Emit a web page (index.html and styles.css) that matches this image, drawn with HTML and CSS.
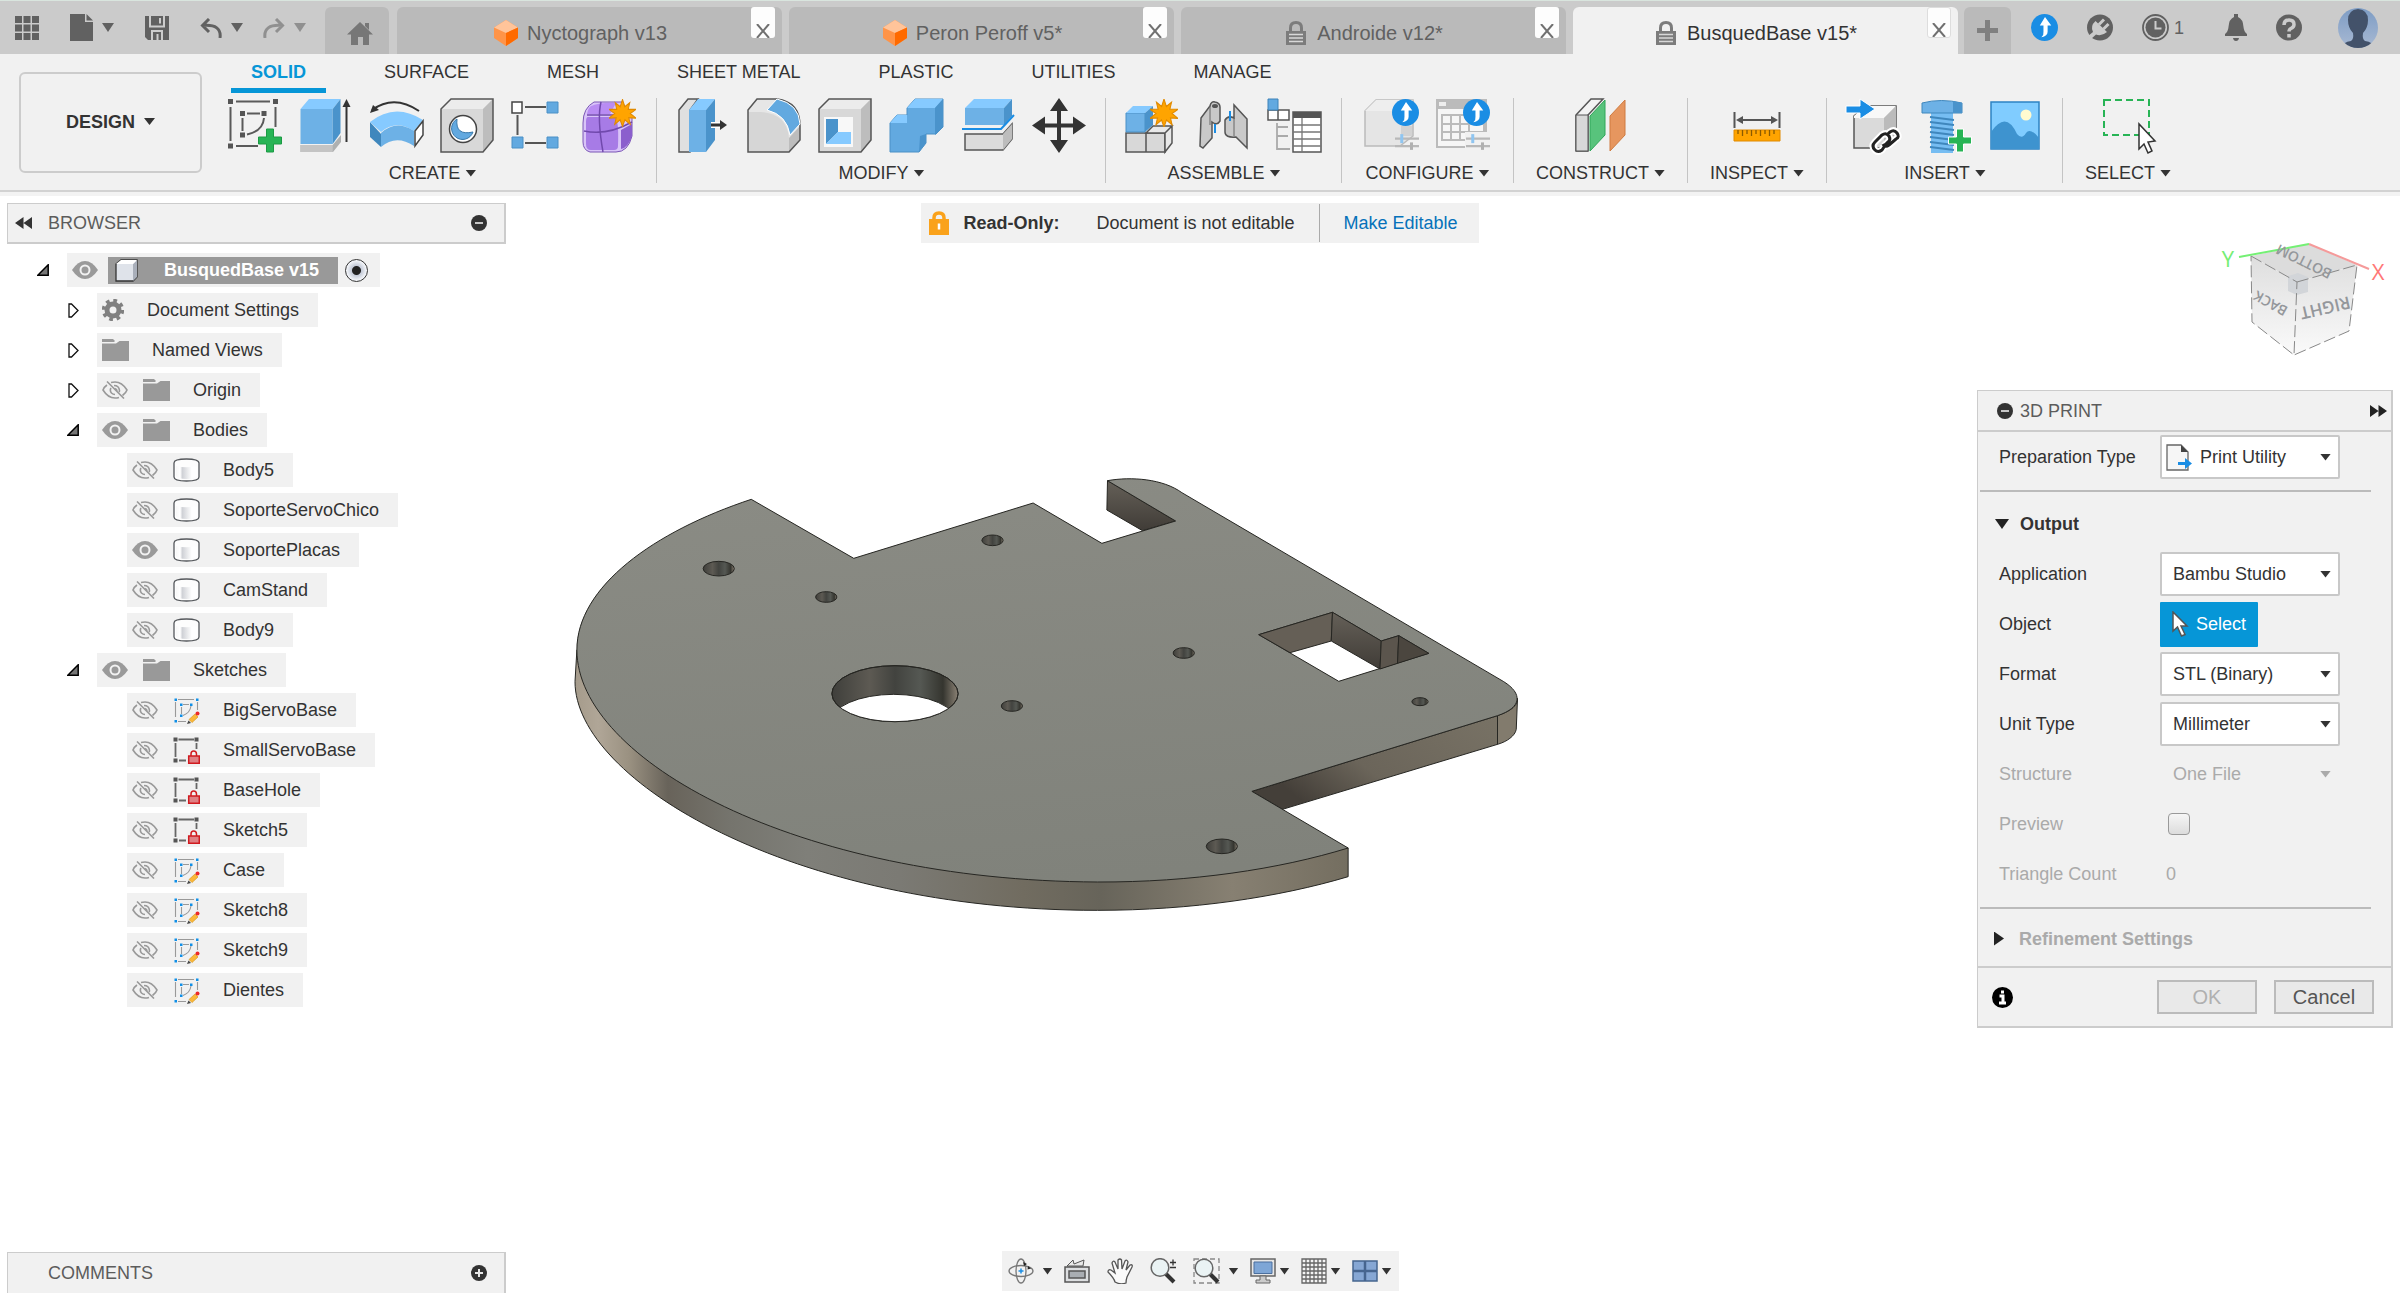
FILE: index.html
```html
<!DOCTYPE html>
<html lang="en">
<head>
<meta charset="utf-8">
<title>BusquedBase v15</title>
<link rel="stylesheet" href="styles.css">
</head>
<body>
<svg class="defs" aria-hidden="true">
  <symbol id="eye" viewBox="0 0 26 18"><path d="M0 9Q6 0 13 0T26 9Q20 18 13 18T0 9Z" fill="#9a9a9a"/><circle cx="13" cy="9" r="4.500" fill="none" stroke="#f1f1f1" stroke-width="2"/></symbol>
  <symbol id="eye-off" viewBox="0 0 26 18"><g fill="none" stroke="#999" stroke-width="1.600"><path d="M5 4Q1.500 6.500 1 9Q6 17 13 17Q15 17 17 16.400M9 1.500Q11 1 13 1Q20 1 25 9Q24 12 20.500 14.500"/><path d="M9 7Q7.500 9.500 9.500 12Q11 13.500 13 13.500M12 4.500Q17 4.500 17.500 9.500Q17.500 10.500 17 11M13 7.500Q15 8 15 10M5 0.500L22 17.500"/></g></symbol>
  <symbol id="folder" viewBox="0 0 27 22"><path d="M0 4.500H14L17.500 2H27V22H0Z" fill="#999"/><path d="M0 0H11L13 2L12 3H0Z" fill="#999"/></symbol>
  <symbol id="body" viewBox="0 0 27 24"><defs><linearGradient id="cyl"><stop offset="0" stop-color="#f7f7f7"/><stop offset=".2" stop-color="#fff"/><stop offset=".3" stop-color="#cfd1d6"/><stop offset=".75" stop-color="#fff"/></linearGradient></defs><path d="M1 5V19Q1 23 13.500 23T26 19V5Q26 1 13.500 1T1 5Z" fill="#fdfdfd" stroke="#55585c" stroke-width="1.300"/><path d="M3 8Q13 10.500 24 8V18Q22 21 13.500 21T3 18Z" fill="url(#cyl)"/></symbol>
  <symbol id="sketch-edit" viewBox="0 0 27 27"><path d="M5 2.500H21M2.500 5V20M24.500 5V13M5 24.500H13M8.500 10V17M10 7.500H16M18 9Q17 16 10 18.500" fill="none" stroke="#999" stroke-width="1.100"/><path d="M1.500 1.500h2.500v2.500H1.500zM23 1.500h2.500v2.500h-2.500zM1.500 23h2.500v2.500H1.500zM7 6.500h2.500v2.500H7zM17 6.500h2.500v2.500h-2.500zM7 17.500h2.500v2.500H7z" fill="#0f8fe8"/><path d="M16 22.500L22 17L25 20L19 25.500Z" fill="#fbb83a" stroke="#d99a20" stroke-width=".7"/><path d="M14 27L15.500 23.500L18 26Z" fill="#444"/><circle cx="24.500" cy="16.500" r="2" fill="#ee2b2b"/></symbol>
  <symbol id="sketch-lock" viewBox="0 0 27 27"><path d="M5.500 2.500H21M2.500 6V20M23.500 6V12M6 23.500H13" fill="none" stroke="#666" stroke-width="1.800"/><path d="M.5.500h4v4h-4zM21.500.500h4v4h-4zM.5 21.500h4v4h-4z" fill="#555"/><path d="M18 19V17Q18 14 20.700 14T23.500 17V19" fill="none" stroke="#d11a1f" stroke-width="1.500"/><path d="M15.700 19h10.600v7.300H15.700z" fill="#df8084" stroke="#d11a1f" stroke-width="1.500"/></symbol>
  <symbol id="open" viewBox="0 0 12 12"><path d="M.8 11.200L11.200.8V11.200Z" fill="#777" stroke="#000" stroke-width="1.500"/></symbol>
  <symbol id="closed" viewBox="0 0 11 15"><path d="M1 1H3.500L10 7.500L3.500 14H1Z" fill="#fff" stroke="#111" stroke-width="1.300"/></symbol>
  <symbol id="minus" viewBox="0 0 16 16"><circle cx="8" cy="8" r="8" fill="#333"/><path d="M4 8H12" stroke="#c8c8c8" stroke-width="2"/></symbol>
  <symbol id="plus-dot" viewBox="0 0 16 16"><circle cx="8" cy="8" r="8" fill="#333"/><path d="M4 8H12M8 4V12" stroke="#e8e8e8" stroke-width="2"/></symbol>
  <symbol id="rewind" viewBox="0 0 17 12"><path d="M8.500 0V12L0 6ZM17 0V12L8.500 6Z" fill="#333"/></symbol>
  <symbol id="forward" viewBox="0 0 17 12"><path d="M0 0V12L8.500 6ZM8.500 0V12L17 6Z" fill="#222"/></symbol>
  <symbol id="design" viewBox="0 0 24 26"><path d="M12 0L24 7.500V18L12 26L0 18V7.500Z" fill="#ff9448"/><path d="M12 0L24 7.500L12 13L0 7.500Z" fill="#ffc49a"/><path d="M24 7.500V18L12 26V13Z" fill="#ff6a00"/></symbol>
  <symbol id="lock" viewBox="0 0 20 24"><path d="M4.500 10V7Q4.500 1.500 10 1.500T15.500 7V10" fill="none" stroke="#7c7c7c" stroke-width="3"/><path d="M0 10H20V24H0Z" fill="#7c7c7c"/><path d="M3 13.500H17M3 17H17M3 20.500H17" stroke="#d8d8d8" stroke-width="1.300"/></symbol>
  <symbol id="badge" viewBox="0 0 26 26"><circle cx="13" cy="13" r="13" fill="#1a8de4"/><path d="M13.500 3L19.500 11H16V17Q16 21 10 22.500Q12.500 20 12 17V11H8.500Z" fill="#fff"/></symbol>
  <symbol id="burst" viewBox="0 0 26 26"><path d="M13 0L15.200 7L20 3L18.500 9.500L26 9.500L20.500 13.500L26 18L19 17.500L20.500 24L15.300 19.500L13 26L10.700 19.500L5.500 24L7 17.500L0 18L5.500 13.500L0 9.500L7.500 9.500L6 3L10.800 7Z" fill="#ffa400" stroke="#e08a00"/></symbol>
  <symbol id="sliders" viewBox="0 0 32 21"><path d="M0 6H32M0 16H32" stroke="#b8b8b8" stroke-width="3"/><path d="M9 0V12" stroke="#8fc5f0" stroke-width="4"/><path d="M22 11V21" stroke="#b0b0b0" stroke-width="4"/></symbol>
</svg>

<header class="titlebar">
  <div class="quick">
    <button class="plain" aria-label="Data panel"><svg width="24" height="24"><path d="M0 0h7v7H0zM8.500 0h7v7h-7zM17 0h7v7h-7zM0 8.500h7v7H0zM8.500 8.500h7v7h-7zM17 8.500h7v7h-7zM0 17h7v7H0zM8.500 17h7v7h-7zM17 17h7v7h-7z" fill="#616161"/></svg></button>
    <button class="plain pair" aria-label="File"><svg width="23" height="27"><path d="M0 0H15V8H23V27H0Z" fill="#616161"/><path d="M16.500 0L23 6.500H16.500Z" fill="#616161"/></svg><i class="caret caret-lg"></i></button>
    <button class="plain" aria-label="Save"><svg width="24" height="24"><path d="M0 0H24V24H3L0 21Z" fill="#616161"/><path d="M5 0V10.500H19V0M7 24V15H17V24M12.500 18V24M15 2V7.500" fill="none" stroke="#cdcdcd" stroke-width="2"/></svg></button>
    <div class="history">
      <button class="plain pair" aria-label="Undo"><svg width="22" height="20"><path d="M20 20Q22 6 3 7.500M9 1L2.500 7.500L9 14" fill="none" stroke="#616161" stroke-width="3"/></svg><i class="caret caret-lg"></i></button>
      <button class="plain pair dim" aria-label="Redo"><svg width="22" height="20"><path d="M2 20Q0 6 19 7.500M13 1L19.500 7.500L13 14" fill="none" stroke="#616161" stroke-width="3"/></svg><i class="caret caret-lg"></i></button>
    </div>
  </div>
  <button class="plain home" aria-label="Home"><svg width="26" height="23"><path d="M13 0L26 12.500H22V23H16V15H11V23H4V12.500H0ZM18 1H22V8L18 4Z" fill="#777"/></svg></button>
  <nav class="docs">
    <div class="doc"><a href="#nyctograph" class="doc-name"><svg width="24" height="26"><use href="#design"/></svg>Nyctograph v13</a><button class="plain close" aria-label="Close"><svg width="14" height="14"><path d="M1 0L13 14M13 0L1 14"/></svg></button></div>
    <div class="doc"><a href="#peron" class="doc-name"><svg width="24" height="26"><use href="#design"/></svg>Peron Peroff v5*</a><button class="plain close" aria-label="Close"><svg width="14" height="14"><path d="M1 0L13 14M13 0L1 14"/></svg></button></div>
    <div class="doc"><a href="#androide" class="doc-name locked"><svg width="20" height="24"><use href="#lock"/></svg>Androide v12*</a><button class="plain close" aria-label="Close"><svg width="14" height="14"><path d="M1 0L13 14M13 0L1 14"/></svg></button></div>
    <div class="doc current"><a href="#busqued" class="doc-name locked"><svg width="20" height="24"><use href="#lock"/></svg>BusquedBase v15*</a><button class="plain close" aria-label="Close"><svg width="14" height="14"><path d="M1 0L13 14M13 0L1 14"/></svg></button></div>
  </nav>
  <button class="plain newdoc" aria-label="New design"><svg width="21" height="21"><path d="M10.500 0V21M0 10.500H21" stroke="#808080" stroke-width="5"/></svg></button>
  <div class="status">
    <button class="plain" aria-label="Updates"><svg width="27" height="27"><use href="#badge"/></svg></button>
    <button class="plain" aria-label="Extensions"><svg width="26" height="27" viewBox="0 0 26 27"><circle cx="13" cy="13.500" r="13" fill="#616161"/><path d="M8.500 7L20 18Q14 23 9 20.500L4 25L1 22L6 18Q3 12 8.500 7Z" fill="#cbcbcb"/><path d="M12 10.500L17 5.500M16.500 15L21.500 10" stroke="#cbcbcb" stroke-width="3"/></svg></button>
    <button class="plain jobs" aria-label="Job status"><svg width="27" height="27" viewBox="0 0 27 27"><circle cx="13.500" cy="13.500" r="12.500" fill="none" stroke="#616161" stroke-width="1.800"/><circle cx="13.500" cy="13.500" r="10" fill="#616161"/><path d="M13.500 7V14.500H19.500" fill="none" stroke="#ccc" stroke-width="2"/></svg><span>1</span></button>
    <button class="plain" aria-label="Notifications"><svg width="22" height="27" viewBox="0 0 22 27"><path d="M9 3V0H13V3Q18 5 18.500 13Q19 18 22 20V22H0V20Q3 18 3.500 13Q4 5 9 3ZM8 24H14Q13.500 27 11 27T8 24Z" fill="#616161"/></svg></button>
    <button class="plain" aria-label="Help"><svg width="26" height="27" viewBox="0 0 26 27"><circle cx="13" cy="13.500" r="13" fill="#616161"/><path d="M8 11Q8 6 13 6T18 10.500Q18 13 15 14.500Q13 15.500 13 17.500M13 20V23.500" fill="none" stroke="#ccc" stroke-width="3.500"/></svg></button>
    <button class="plain avatar" aria-label="Account"><svg width="40" height="40" viewBox="0 0 40 40"><defs><clipPath id="av"><circle cx="20" cy="20" r="20"/></clipPath><linearGradient id="avg" x2="0" y2="1"><stop offset="0" stop-color="#7d9cc4"/><stop offset="1" stop-color="#a8b9d3"/></linearGradient></defs><g clip-path="url(#av)"><path d="M0 0H40V40H0Z" fill="url(#avg)"/><path d="M3 40Q5 34 13 33Q16 31 15 25Q10 20 10 12Q10 2 20 1Q30 2 30 12Q30 20 25 25Q24 31 27 33Q35 34 37 40Z" fill="#43526a"/></g></svg></button>
  </div>
</header>

<section class="ribbon">
  <button class="design">DESIGN <i class="caret"></i></button>
  <div class="ribbon-main">
    <nav class="modes">
      <a href="#solid" class="on">SOLID</a><a href="#surface">SURFACE</a><a href="#mesh">MESH</a><a href="#sheet">SHEET METAL</a><a href="#plastic">PLASTIC</a><a href="#utilities">UTILITIES</a><a href="#manage">MANAGE</a>
    </nav>
    <div class="panels">
      <div class="panel">
        <div class="tools">
          <button class="plain" aria-label="Create sketch"><svg width="56" height="56"><path d="M9 3.500H43M3.500 9V43M48.500 9V29M9 48H31M15.500 20V33M20 15.500H33M37 20Q36 33 20 36.500" fill="none" stroke="#5a5a5a" stroke-width="2"/><path d="M1 1h5v5H1zM46 1h5v5h-5zM1 45.500h5v5H1zM13 13h5v5h-5zM34.500 13h5v5h-5zM13 34.500h5v5h-5z" fill="#555"/><path d="M39.500 31h7v8h8v7h-8v8h-7v-8h-8v-7h8z" fill="#27b455" stroke="#1c9a44"/></svg></button>
          <button class="plain" aria-label="Extrude"><svg width="56" height="56"><path d="M2.500 47H34.700L43 37V44L35 54H2.500Z" fill="#aeb0b0"/><path d="M2.500 47H34.700V54H2.500Z" fill="#c4c4c4"/><path d="M2.500 11H34.700V46H2.500Z" fill="#6db1e6"/><path d="M2.500 11L11 1H42.500L34.700 11Z" fill="#86caff"/><path d="M34.700 11L42.500 1V35L34.700 46Z" fill="#4a93cb"/><path d="M48.500 44V5" stroke="#333" stroke-width="2"/><path d="M48.500 1L52.500 9H44.500Z" fill="#333"/></svg></button>
          <button class="plain" aria-label="Revolve"><svg width="56" height="56"><path d="M3 12Q25 -4 50 13" fill="none" stroke="#333" stroke-width="2"/><path d="M1 15L4 7L10 12Z" fill="#333"/><path d="M1 24L12 36V49L1 39Z" fill="#3f87bd"/><path d="M1 24Q26 4 54 22L45 33Q27 21 12 34Z" fill="#86caff"/><path d="M12 35Q27 21 45 33V48Q27 36 12 49Z" fill="#6db1e6"/><path d="M46 33L54 23V37L46 48Z" fill="#fff" stroke="#444" stroke-width="1.500"/></svg></button>
          <button class="plain" aria-label="Hole"><svg width="56" height="56"><path d="M1 11L11 1H53V42L43 54H1Z" fill="#d8d8d8"/><path d="M1 11L11 1H53L43 11Z" fill="#ececec"/><path d="M53 1V42L43 54V11Z" fill="#bdbdbd"/><path d="M1 11L11 1H53V42L43 54H1Z" fill="none" stroke="#555" stroke-width="1.500"/><circle cx="23" cy="31" r="13.500" fill="#fff" stroke="#444" stroke-width="1.500"/><path d="M17 21A11 11 0 1 0 33 34Q15 38 17 21Z" fill="#62a9e0" stroke="#3979ab"/></svg></button>
          <button class="plain" aria-label="Pattern"><svg width="56" height="56"><path d="M14 9H35M6.500 17V37M14 45H35" stroke="#555" stroke-width="2"/><path d="M1 4h10v11H1z" fill="#fff" stroke="#444" stroke-width="1.500"/><path d="M36 4h11v11H36zM1 39h11v11H1zM36 39h11v11H36z" fill="#62a9e0" stroke="#4b90c6"/></svg></button>
          <button class="plain" aria-label="Create form"><svg width="56" height="56"><path d="M1 25Q1 10 12 4H40L50 18V38Q46 54 34 54H8Q1 52 1 44Z" fill="#d9c4f8" stroke="#7b56b6"/><path d="M6 19H33Q37 22 36 48Q36 52 32 52H9Q4 52 4 46V24Q4 19 6 19Z" fill="#a77be6"/><path d="M39 32L50 26V38Q46 50 39 51Z" fill="#8b5fcd"/><path d="M9 8Q20 4 34 5L28 16H5Q6 10 9 8Z" fill="#b98cf3"/><path d="M2 33Q25 38 50 24M19 4Q15 20 21 54M5 17H37" fill="none" stroke="#7149ad" stroke-width="1.500"/><use href="#burst" x="27" y="1" width="27" height="28"/></svg></button>
        </div>
        <button class="plain label">CREATE <i class="caret"></i></button>
      </div>
      <div class="panel">
        <div class="tools">
          <button class="plain" aria-label="Press pull"><svg width="56" height="56"><path d="M3 12L12 1H22L14 12V54H3Z" fill="#e0e0e0" stroke="#555" stroke-width="1.500"/><path d="M13 12H30V54H13Z" fill="#6db1e6"/><path d="M13 12L22 1H39L30 12Z" fill="#86caff"/><path d="M30 12L39 1V42L30 54Z" fill="#4a93cb"/><path d="M35 27H46" stroke="#fff" stroke-width="6"/><path d="M35 27H46" stroke="#333" stroke-width="3"/><path d="M44 22L51 27L44 32Z" fill="#333"/></svg></button>
          <button class="plain" aria-label="Fillet"><svg width="56" height="56"><path d="M1 12L10 1H30Q53 4 53 28V42L42 54H1Z" fill="#e6e6e6"/><path d="M1 14H14Q40 16 42 40V54H1Z" fill="#d6d6d6"/><path d="M42 40L53 28V42L42 54Z" fill="#bdbdbd"/><path d="M1 12L10 1H30Q53 4 53 28V42L42 54H1Z" fill="none" stroke="#555" stroke-width="1.500"/><path d="M20 12L30 1Q52 6 53 26L43 37Q40 17 20 12Z" fill="#62a9e0" stroke="#fff"/></svg></button>
          <button class="plain" aria-label="Shell"><svg width="56" height="56"><path d="M1 11L11 1H53V42L43 54H1Z" fill="#d8d8d8"/><path d="M1 11L11 1H53L43 11Z" fill="#ececec"/><path d="M53 1V42L43 54V11Z" fill="#bdbdbd"/><path d="M1 11L11 1H53V42L43 54H1Z" fill="none" stroke="#555" stroke-width="1.500"/><path d="M6 19H35V49H6Z" fill="#f8f8f8"/><path d="M8 21H20V34L8 46Z" fill="#4a93cb"/><path d="M20 34H33V46H8Z" fill="#86caff"/></svg></button>
          <button class="plain" aria-label="Combine"><svg width="56" height="56"><path d="M1 25L8 17H18V10L26 1H54V29L47 36H37V45L30 54H1Z" fill="#62a9e0" stroke="#4b90c6"/><path d="M18 10L26 1H54L46 10ZM1 25L8 17H18V25Z" fill="#86caff"/><path d="M46 10L54 1V29L46 37ZM31 38L37 36V45L30 54Z" fill="#4a93cb"/></svg></button>
          <button class="plain" aria-label="Split body"><svg width="56" height="56"><path d="M5 10H44V27H5Z" fill="#6db1e6"/><path d="M5 10L14 1H52L44 10Z" fill="#86caff"/><path d="M44 10L52 1V18L44 27Z" fill="#4a93cb"/><path d="M2 31H41L54 17" fill="none" stroke="#1a8de4" stroke-width="2"/><path d="M5 36H43L52 26V41L43 52H5Z" fill="#dcdcdc" stroke="#555" stroke-width="1.500"/><path d="M43 36L52 26V41L43 52Z" fill="#bdbdbd"/></svg></button>
          <button class="plain" aria-label="Move"><svg width="56" height="56"><path d="M28 9V46M10 27.500H46" stroke="#333" stroke-width="4"/><path d="M28 0L37 13H19ZM28 55L37 42H19ZM1 27.500L14 18.500V36.500ZM55 27.500L42 18.500V36.500Z" fill="#333"/></svg></button>
        </div>
        <button class="plain label">MODIFY <i class="caret"></i></button>
      </div>
      <div class="panel">
        <div class="tools">
          <button class="plain" aria-label="New component"><svg width="56" height="56"><path d="M1 35H21V54H1ZM21 35H40V54H21Z" fill="#d8d8d8" stroke="#555" stroke-width="1.500"/><path d="M21 35L28 28H47L40 35ZM40 35L47 28V45L40 54Z" fill="#e8e8e8" stroke="#555" stroke-width="1.500"/><path d="M1 15H20V34H1Z" fill="#6db1e6" stroke="#4b90c6"/><path d="M1 15L8 8H28L20 15Z" fill="#86caff"/><path d="M20 15L28 8V27L20 34Z" fill="#4a93cb"/><use href="#burst" x="25" y="1" width="28" height="28"/></svg></button>
          <button class="plain" aria-label="Joint"><svg width="56" height="56"><path d="M5 20L14 8Q15 3 19 4Q24 5 24 9V23Q21 28 16 24V40L7 50L4 48Z" fill="#c9c9c9" stroke="#555" stroke-width="1.500"/><path d="M14 8V27" fill="none" stroke="#666"/><ellipse cx="19" cy="8" rx="3" ry="2" fill="#555"/><path d="M51 50L40 39Q29 40 29 34V22Q32 17 38 20V7L51 21Z" fill="#c9c9c9" stroke="#555" stroke-width="1.500"/><path d="M38 20V38" stroke="#666"/><path d="M19 26V35M34 13V23" stroke="#1a8de4" stroke-width="2"/></svg></button>
          <button class="plain" aria-label="Component table"><svg width="56" height="56"><path d="M1 12H11V22H1ZM11 12H22V22H11Z" fill="#fff" stroke="#555" stroke-width="1.500"/><path d="M1 1H11V12H1Z" fill="#62a9e0" stroke="#3c82b8"/><path d="M10 25V51H23M10 29H21M10 38H21" fill="none" stroke="#aaa" stroke-width="1.800"/><path d="M26 14H54V54H26Z" fill="#fff" stroke="#555" stroke-width="1.500"/><path d="M26 14H54V20H26Z" fill="#555"/><path d="M26 27H54M26 34H54M26 41H54M26 48H54M35 20V54" stroke="#777" stroke-width="1.300"/></svg></button>
        </div>
        <button class="plain label">ASSEMBLE <i class="caret"></i></button>
      </div>
      <div class="panel narrow">
        <div class="tools">
          <button class="plain" aria-label="Configure model"><svg width="56" height="56"><path d="M1 13L12 2H49V38L36 48H1Z" fill="#e5e5e5" stroke="#bbb" stroke-width="1.500"/><path d="M1 13L12 2H49L37 13Z" fill="#eee"/><path d="M37 28H48V38H37Z" fill="#d2d2d2"/><use href="#badge" x="28" y="1" width="27" height="27"/><use href="#sliders" x="31" y="34" width="24" height="20"/></svg></button>
          <button class="plain" aria-label="Configuration table"><svg width="56" height="56"><path d="M2 2H51V49H2Z" fill="#f6f6f6" stroke="#bbb" stroke-width="2"/><path d="M1 1H52V11H1Z" fill="#bbb"/><path d="M4 4H11V8H4Z" fill="#eee"/><path d="M7 17H49V42H7ZM7 26H49M7 34H49M16 17V42M25 17V42M34 17V42" fill="none" stroke="#bbb" stroke-width="2"/><path d="M30 34H55V55H30Z" fill="#f1f1f1"/><use href="#badge" x="28" y="1" width="27" height="27"/><use href="#sliders" x="31" y="34" width="24" height="20"/></svg></button>
        </div>
        <button class="plain label">CONFIGURE <i class="caret"></i></button>
      </div>
      <div class="panel narrow">
        <div class="tools"><button class="plain" aria-label="Offset plane"><svg width="56" height="56"><path d="M3 17L18 1H30L15 17V53H3Z" fill="#f3f3f3" stroke="#555" stroke-width="1.500"/><path d="M3 17H15V53H3Z" fill="#d8d8d8" stroke="#555"/><path d="M17 18L32 2V37L17 53Z" fill="#58c37c" stroke="#2ea658"/><path d="M37 18L52 2V37L37 53Z" fill="#e6965f" stroke="#cf7b40"/></svg></button></div>
        <button class="plain label">CONSTRUCT <i class="caret"></i></button>
      </div>
      <div class="panel narrow">
        <div class="tools"><button class="plain" aria-label="Measure"><svg width="56" height="56"><path d="M5.500 14V30M50.500 14V30M9 22H47" stroke="#555" stroke-width="2"/><path d="M7 22L14 18V26ZM49 22L42 18V26Z" fill="#555"/><path d="M5 32H51V43H5Z" fill="#ffa400" stroke="#e08a00"/><path d="M9 32V36M13.500 32V38M18 32V36M22.500 32V38M27 32V36M31.500 32V38M36 32V36M40.500 32V38M45 32V36" stroke="#8a5a00" stroke-width="1.300"/></svg></button></div>
        <button class="plain label">INSPECT <i class="caret"></i></button>
      </div>
      <div class="panel">
        <div class="tools">
          <button class="plain" aria-label="Insert derive"><svg width="56" height="56"><path d="M8 18L19 8H50V39L39 50H8Z" fill="#dadada" stroke="#555" stroke-width="1.500"/><path d="M8 18L19 8H50L38 20H8Z" fill="#f8f8f8"/><path d="M50 8V39L38 50V20Z" fill="#bbb"/><path d="M0 8H14V1L29 11L14 21V15H0Z" fill="#1a8de4" stroke="#fff" stroke-width="1"/><g fill="none"><path d="M29 44L36 37Q40 34 43 38Q45 42 42 44L38 48M41 37L44 34Q48 31 51 35T50 41L43 47Q39 50 37 46M29 44Q25 48 29 52Q32 55 36 52L38 49" stroke="#fff" stroke-width="7"/><path d="M29 44L36 37Q40 34 43 38Q45 42 42 44L38 48M41 37L44 34Q48 31 51 35T50 41L43 47Q39 50 37 46M29 44Q25 48 29 52Q32 55 36 52L38 49" stroke="#222" stroke-width="3"/></g></svg></button>
          <button class="plain" aria-label="Insert fastener"><svg width="56" height="56"><path d="M14 15H36V55H14Z" fill="#76bdf2"/><path d="M13 19L37 22M13 24L37 27M13 29L37 32M13 34L37 37M13 39L37 42M13 44L37 47M13 49L37 52" stroke="#3f87bd" stroke-width="1.800"/><path d="M5 5Q24 0 45 5V15H5Z" fill="#6db1e6" stroke="#3f87bd"/><path d="M36 3L45 5V15H36Z" fill="#4a93cb"/><path d="M39.500 31h7v8h8v7h-8v8h-7v-8h-8v-7h8z" fill="#27b455" stroke="#fff"/></svg></button>
          <button class="plain" aria-label="Insert canvas"><svg width="56" height="56"><path d="M3 4H51V51H3Z" fill="#80ccff" stroke="#2d83c4" stroke-width="1.500"/><path d="M3 34Q18 12 29 36Q34 42 38 35Q42 29 51 40V51H3Z" fill="#3e93cf"/><circle cx="38" cy="17" r="5.500" fill="#fffbd0"/></svg></button>
        </div>
        <button class="plain label">INSERT <i class="caret"></i></button>
      </div>
      <div class="panel narrow">
        <div class="tools"><button class="plain" aria-label="Select"><svg width="56" height="56"><path d="M4 2H49V37H4Z" fill="none" stroke="#27b455" stroke-width="2" stroke-dasharray="7 4"/><path d="M39 26V51L44 46L48 55L52 53L48 44L55 43Z" fill="#fff" stroke="#333" stroke-width="1.500"/></svg></button></div>
        <button class="plain label">SELECT <i class="caret"></i></button>
      </div>
    </div>
  </div>
</section>

<main class="work">
  <svg class="model" viewBox="0 0 1568 1410" preserveAspectRatio="none" role="img" aria-label="SoportePlacas body">
    <defs>
      <linearGradient id="face" x1=".3" y1="0" x2=".5" y2="1"><stop offset="0" stop-color="#8a8b84"/><stop offset="1" stop-color="#80827b"/></linearGradient>
      <linearGradient id="rim" gradientUnits="userSpaceOnUse" x1="24" y1="0" x2="1261" y2="0"><stop offset="0" stop-color="#a59b8b"/><stop offset=".03" stop-color="#b0a697"/><stop offset=".07" stop-color="#9a9181"/><stop offset=".12" stop-color="#68635a"/><stop offset=".2" stop-color="#75746d"/><stop offset=".3" stop-color="#7f7f79"/><stop offset=".42" stop-color="#7b7a74"/><stop offset=".58" stop-color="#716c60"/><stop offset=".68" stop-color="#67645a"/><stop offset=".85" stop-color="#878072"/><stop offset="1" stop-color="#746e60"/></linearGradient>
      <linearGradient id="notch" x1="0" y1=".5" x2="1" y2="0"><stop offset="0" stop-color="#443f39"/><stop offset=".35" stop-color="#6b655a"/><stop offset="1" stop-color="#787265"/></linearGradient>
      <linearGradient id="bore"><stop offset="0" stop-color="#3f3f3b"/><stop offset=".3" stop-color="#5d5a53"/><stop offset=".5" stop-color="#42433f"/><stop offset=".7" stop-color="#555853"/><stop offset=".88" stop-color="#35352f"/><stop offset="1" stop-color="#8b8275"/></linearGradient>
      <linearGradient id="dark" x2="0" y2="1"><stop offset="0" stop-color="#656058"/><stop offset="1" stop-color="#403c37"/></linearGradient>
      <clipPath id="hole"><ellipse cx="536" cy="701" rx="101" ry="84"/></clipPath>
    </defs>
    <g class="edges">
      <path d="M27 570L24 665C24 960 370 1351 860 1351C1010 1351 1150 1312 1261 1250V1164L860 1100L100 700Z" fill="url(#rim)"/>
      <path d="M1107 994L1500 767V853L1156 1048Z" fill="url(#notch)"/>
      <path d="M1500 767C1525 750 1532 735 1532 715L1530 808C1528 828 1515 845 1500 853Z" fill="#827b6d"/>
      <path d="M876 62L985 183L932 212L875 150Z" fill="url(#dark)"/>
      <path d="M306 118L470 295L757 129L867 250L985 183L876 62C915 49 965 57 995 98L1510 665C1540 700 1540 742 1500 767L1107 994L1261 1164C1150 1228 1010 1267 860 1266C380 1262 27 900 27 570C27 380 150 215 306 118Z" fill="url(#face)"/>
      <ellipse cx="536" cy="701" rx="101" ry="84" fill="url(#bore)"/>
      <g clip-path="url(#hole)"><ellipse cx="534" cy="787" rx="101" ry="84" fill="#fff"/></g>
      <ellipse cx="536" cy="701" rx="101" ry="84" fill="none"/>
      <path d="M1118 524L1236 457L1314 543L1342 527L1390 580L1246 664Z" fill="#fff"/>
      <path d="M1118 524L1236 457L1234 543L1168 578Z" fill="#655f56"/>
      <path d="M1236 457L1314 543L1312 627L1234 543Z" fill="url(#dark)"/>
      <path d="M1314 543L1342 527L1340 610L1312 627Z" fill="#5b554d"/>
      <path d="M1342 527L1390 580L1340 610Z" fill="#4b463f"/>
      <g fill="url(#bore)">
        <ellipse cx="254" cy="326" rx="25" ry="22"/><ellipse cx="692" cy="241" rx="17" ry="16"/><ellipse cx="426" cy="411" rx="17" ry="16"/><ellipse cx="998" cy="579" rx="17" ry="16"/><ellipse cx="723" cy="738" rx="17" ry="16"/><ellipse cx="1376" cy="725" rx="13" ry="12"/><ellipse cx="1059" cy="1159" rx="25" ry="22"/>
      </g>
    </g>
  </svg>

  <aside class="left">
    <div class="bar"><svg width="17" height="12"><use href="#rewind"/></svg><h2>BROWSER</h2><button class="plain" aria-label="Minimize"><svg width="16" height="16"><use href="#minus"/></svg></button></div>
    <ul class="tree">
      <li><div class="row"><svg class="tw" width="12" height="12"><use href="#open"/></svg><div class="chip root"><svg width="26" height="18"><use href="#eye"/></svg><span class="sel"><svg width="23" height="23"><path d="M1 5L6 1H22V18L18 22H1Z" fill="#dfe3ea" stroke="#333" stroke-width="1.300"/><path d="M18 5L22 1V18L18 22Z" fill="#a9afba"/><path d="M1 5L6 1H22L18 5Z" fill="#fff"/></svg>BusquedBase v15</span><input type="radio" checked aria-label="Activate BusquedBase"></div></div>
        <ul>
          <li><div class="row"><svg class="tw" width="11" height="15"><use href="#closed"/></svg><div class="chip"><svg width="22" height="22" viewBox="0 0 22 22"><circle cx="11" cy="11" r="6" fill="none" stroke="#808080" stroke-width="5"/><circle cx="11" cy="11" r="9.500" fill="none" stroke="#808080" stroke-width="3.500" stroke-dasharray="3.700 3.760"/></svg><span>Document Settings</span></div></div></li>
          <li><div class="row"><svg class="tw" width="11" height="15"><use href="#closed"/></svg><div class="chip"><svg width="27" height="22"><use href="#folder"/></svg><span>Named Views</span></div></div></li>
          <li><div class="row"><svg class="tw" width="11" height="15"><use href="#closed"/></svg><div class="chip"><svg class="eye" width="26" height="18"><use href="#eye-off"/></svg><svg width="27" height="22"><use href="#folder"/></svg><span>Origin</span></div></div></li>
          <li><div class="row"><svg class="tw" width="12" height="12"><use href="#open"/></svg><div class="chip"><svg class="eye" width="26" height="18"><use href="#eye"/></svg><svg width="27" height="22"><use href="#folder"/></svg><span>Bodies</span></div></div>
            <ul>
              <li><div class="chip"><svg class="eye" width="26" height="18"><use href="#eye-off"/></svg><svg width="27" height="24"><use href="#body"/></svg><span>Body5</span></div></li>
              <li><div class="chip"><svg class="eye" width="26" height="18"><use href="#eye-off"/></svg><svg width="27" height="24"><use href="#body"/></svg><span>SoporteServoChico</span></div></li>
              <li><div class="chip"><svg class="eye" width="26" height="18"><use href="#eye"/></svg><svg width="27" height="24"><use href="#body"/></svg><span>SoportePlacas</span></div></li>
              <li><div class="chip"><svg class="eye" width="26" height="18"><use href="#eye-off"/></svg><svg width="27" height="24"><use href="#body"/></svg><span>CamStand</span></div></li>
              <li><div class="chip"><svg class="eye" width="26" height="18"><use href="#eye-off"/></svg><svg width="27" height="24"><use href="#body"/></svg><span>Body9</span></div></li>
            </ul>
          </li>
          <li><div class="row"><svg class="tw" width="12" height="12"><use href="#open"/></svg><div class="chip"><svg class="eye" width="26" height="18"><use href="#eye"/></svg><svg width="27" height="22"><use href="#folder"/></svg><span>Sketches</span></div></div>
            <ul>
              <li><div class="chip"><svg class="eye" width="26" height="18"><use href="#eye-off"/></svg><svg width="27" height="27"><use href="#sketch-edit"/></svg><span>BigServoBase</span></div></li>
              <li><div class="chip"><svg class="eye" width="26" height="18"><use href="#eye-off"/></svg><svg width="27" height="27"><use href="#sketch-lock"/></svg><span>SmallServoBase</span></div></li>
              <li><div class="chip"><svg class="eye" width="26" height="18"><use href="#eye-off"/></svg><svg width="27" height="27"><use href="#sketch-lock"/></svg><span>BaseHole</span></div></li>
              <li><div class="chip"><svg class="eye" width="26" height="18"><use href="#eye-off"/></svg><svg width="27" height="27"><use href="#sketch-lock"/></svg><span>Sketch5</span></div></li>
              <li><div class="chip"><svg class="eye" width="26" height="18"><use href="#eye-off"/></svg><svg width="27" height="27"><use href="#sketch-edit"/></svg><span>Case</span></div></li>
              <li><div class="chip"><svg class="eye" width="26" height="18"><use href="#eye-off"/></svg><svg width="27" height="27"><use href="#sketch-edit"/></svg><span>Sketch8</span></div></li>
              <li><div class="chip"><svg class="eye" width="26" height="18"><use href="#eye-off"/></svg><svg width="27" height="27"><use href="#sketch-edit"/></svg><span>Sketch9</span></div></li>
              <li><div class="chip"><svg class="eye" width="26" height="18"><use href="#eye-off"/></svg><svg width="27" height="27"><use href="#sketch-edit"/></svg><span>Dientes</span></div></li>
            </ul>
          </li>
        </ul>
      </li>
    </ul>
    <div class="bar comments"><h2>COMMENTS</h2><button class="plain" aria-label="Expand comments"><svg width="16" height="16"><use href="#plus-dot"/></svg></button></div>
  </aside>

  <div class="center">
    <div class="readonly">
      <svg width="20" height="24"><path d="M5 10V7Q5 2 10 2T15 7V10" fill="none" stroke="#faa21b" stroke-width="3.500"/><path d="M0 8H20V24H0Z" fill="#faa21b"/><path d="M10 12.500V18.500" stroke="#fff" stroke-width="2.500"/></svg>
      <strong>Read-Only:</strong><span class="note">Document is not editable</span><a href="#edit">Make Editable</a>
    </div>
    <div class="nav">
      <button class="plain wide" aria-label="Orbit"><svg width="26" height="26"><ellipse cx="13" cy="13" rx="12" ry="5.500" fill="none" stroke="#777" stroke-width="1.300"/><ellipse cx="13" cy="13" rx="5" ry="12" fill="none" stroke="#777" stroke-width="1.300"/><circle cx="13" cy="13" r="4" fill="#f1f1f1"/><path d="M13 10.500V15.500M10.500 13H15.500" stroke="#1a8de4" stroke-width="1.500"/><path d="M15 4L19 6L16 8ZM20 8L23 10.500L19.500 11.500Z" fill="#222"/></svg><i class="caret"></i></button>
      <button class="plain" aria-label="Look at"><svg width="26" height="26"><path d="M1 9H25V24H1Z" fill="#dcdee0" stroke="#555" stroke-width="1.500"/><path d="M5 13H21V20H5Z" fill="#a9adb2" stroke="#555" stroke-width="1.500"/><path d="M3 8L9 2L10 6L20 2L19 8Z" fill="#e8e8e8" stroke="#555"/></svg></button>
      <button class="plain" aria-label="Pan"><svg width="26" height="26"><path d="M8 24Q7 20 1 14Q1 11 4 12L8 15L5 5Q6 2 8 4L11 11L11 2Q13 0 14.500 2L15 11L18 3Q20 1 21 4L19 12L23 7Q26 6 25 9L20 19Q19 22 19 25Q13 27 8 24Z" fill="#fafafa" stroke="#555" stroke-width="1.300"/></svg></button>
      <button class="plain" aria-label="Zoom"><svg width="26" height="26"><path d="M16 16L24 24" stroke="#333" stroke-width="4"/><circle cx="10" cy="9.500" r="8.800" fill="#eaf3f4" stroke="#666" stroke-width="1.500"/><path d="M20 4.500H26M23 1.500V7.500M20 9.500H26" stroke="#333" stroke-width="1.300"/></svg></button>
      <button class="plain wide" aria-label="Fit"><svg width="27" height="26"><path d="M1 1H26V25H1Z" fill="none" stroke="#888" stroke-width="1.300" stroke-dasharray="5 3"/><path d="M17 16L25 24" stroke="#333" stroke-width="4"/><circle cx="11" cy="10" r="8.800" fill="#eaf3f4" stroke="#666" stroke-width="1.500"/></svg><i class="caret"></i></button>
      <button class="plain" aria-label="Display settings"><svg width="26" height="26"><path d="M1 1H25V18H1Z" fill="#e6e6e6" stroke="#666" stroke-width="1.500"/><path d="M4 4H22V15.500H4Z" fill="#7ea6d6" stroke="#4b6f9e"/><path d="M10 18H16V22H20V25H6V22H10Z" fill="#ccc" stroke="#666"/></svg><i class="caret"></i></button>
      <button class="plain" aria-label="Grid and snaps"><svg width="26" height="26"><path d="M1 1H25V25H1ZM1 5H25M1 9H25M1 13H25M1 17H25M1 21H25M5 1V25M9 1V25M13 1V25M17 1V25M21 1V25" fill="#f4f4f4" stroke="#666" stroke-width="1.300"/></svg><i class="caret"></i></button>
      <button class="plain" aria-label="Viewports"><svg width="26" height="26"><path d="M1 3H12.500V12.500H1ZM13.500 3H25V12.500H13.500ZM1 13.500H12.500V23H1ZM13.500 13.500H25V23H13.500Z" fill="#86a7d4" stroke="#46658f" stroke-width="1.500"/></svg><i class="caret"></i></button>
    </div>
  </div>

  <aside class="right">
    <svg class="cube" width="173" height="187" viewBox="2220 203 173 187" role="img" aria-label="View cube">
      <defs><linearGradient id="cf" x2="0" y2="1"><stop offset="0" stop-color="#dedede"/><stop offset="1" stop-color="#fafafa"/></linearGradient></defs>
      <path d="M2251 256L2309 244L2357 265L2297 282Z" fill="#dcdcdc"/><path d="M2251 256L2297 282L2294 355L2252 322ZM2297 282L2357 265L2349 331L2294 355Z" fill="url(#cf)"/>
      <path d="M2288 276L2298 273L2308 277V292L2297 295L2288 291Z" fill="#d2d5d9"/>
      <path d="M2251 256L2297 282L2294 355L2252 322ZM2297 282L2357 265L2349 331L2294 355" fill="none" stroke="#888" stroke-dasharray="12 4"/>
      <path d="M2239 257L2309 244" stroke="#74f074" stroke-width="2"/><path d="M2309 244L2369 269" stroke="#f59a9a" stroke-width="2"/>
      <g class="cube-text">
        <text class="ax-y" x="2228" y="267">Y</text><text class="ax-x" x="2378" y="280">X</text>
        <text transform="translate(2324 302) rotate(167)">RIGHT</text>
        <text class="sm" transform="translate(2273 299) rotate(209)">BACK</text>
        <text class="sm" transform="translate(2306 257) rotate(206)">BOTTOM</text>
      </g>
    </svg>
    <form class="dialog">
      <div class="dialog-head"><svg width="16" height="16"><use href="#minus"/></svg><h2>3D PRINT</h2><svg width="17" height="12"><use href="#forward"/></svg></div>
      <div class="dialog-body">
        <div class="field"><label for="prep">Preparation Type</label><div class="pick icon"><select id="prep"><option>Print Utility</option></select><svg width="27" height="27"><path d="M1 1H15L22 8V26H1Z" fill="#f6f6f6" stroke="#666" stroke-width="1.300"/><path d="M15 1L22 8H15Z" fill="#444"/><path d="M12 18H19V14L26 19.500L19 25V21H12Z" fill="#1a8de4"/></svg><i class="caret"></i></div></div>
        <hr>
        <h3 class="section"><i class="tri-down"></i>Output</h3>
        <div class="field"><label for="app">Application</label><div class="pick"><select id="app"><option>Bambu Studio</option></select><i class="caret"></i></div></div>
        <div class="field"><label for="obj">Object</label><button type="button" id="obj" class="select-btn"><svg width="18" height="26"><path d="M2 1V20L6.500 16L10.500 25L14 23.500L10 15H16Z" fill="#fff" stroke="#555" stroke-width="1.500"/></svg>Select</button></div>
        <div class="field"><label for="fmt">Format</label><div class="pick"><select id="fmt"><option>STL (Binary)</option></select><i class="caret"></i></div></div>
        <div class="field"><label for="unit">Unit Type</label><div class="pick"><select id="unit"><option>Millimeter</option></select><i class="caret"></i></div></div>
        <div class="field off"><label for="struct">Structure</label><div class="pick"><select id="struct" disabled><option>One File</option></select><i class="caret"></i></div></div>
        <div class="field off"><label for="prev">Preview</label><input type="checkbox" id="prev" disabled></div>
        <div class="field off"><label for="tri">Triangle Count</label><output id="tri">0</output></div>
        <hr>
        <h3 class="section last"><i class="tri-right"></i>Refinement Settings</h3>
      </div>
      <div class="dialog-foot"><svg width="21" height="21"><circle cx="10.500" cy="10.500" r="10.500" fill="#000"/><path d="M10.500 3.500V6.500M7.500 9H11V15.500M7 16H14" fill="none" stroke="#fff" stroke-width="3"/></svg><button type="button" disabled>OK</button><button type="button">Cancel</button></div>
    </form>
  </aside>
</main>
</body>
</html>
```
FILE: styles.css
```css
* { box-sizing: border-box; }
body {
  margin: 0;
  min-height: 100vh;
  display: flex;
  flex-direction: column;
  background: #fff;
  color: #333;
  font: 18px/20px "Liberation Sans", Arial, sans-serif;
}
h2, h3, ul { margin: 0; padding: 0; font-size: 18px; font-weight: 400; }
ul { list-style: none; }
a { color: inherit; text-decoration: none; }
svg { display: block; flex: none; }
button, select { font: inherit; color: inherit; }
.defs { position: absolute; width: 0; height: 0; }
.plain {
  display: flex;
  align-items: center;
  padding: 0;
  border: 0;
  background: none;
}
.caret {
  flex: none;
  width: 11px;
  height: 7px;
  background: #333;
  clip-path: polygon(0 0, 100% 0, 50% 100%);
}
.caret-lg { width: 12px; height: 9px; background: #616161; }

/* title bar */
.titlebar {
  display: flex;
  align-items: flex-end;
  height: 54px;
  background: #cbcbcb;
  border-top: 1px solid #d9e5de;
}
.quick {
  width: 325px;
  height: 53px;
  padding-left: 15px;
  display: flex;
  align-items: center;
  gap: 31px;
}
.history { display: flex; gap: 20px; }
.pair { gap: 9px; }
.dim { opacity: .55; }
.home, .newdoc {
  height: 47px;
  justify-content: center;
  background: #bababa;
  border-radius: 6px 6px 0 0;
}
.home { width: 64px; padding: 6px 0 0 6px; }
.newdoc { width: 47px; margin-left: 6px; }
.docs {
  flex: 1;
  display: flex;
  gap: 7px;
  margin-left: 8px;
}
.doc {
  flex: 1;
  height: 47px;
  display: flex;
  align-items: flex-start;
  padding-right: 7px;
  background: #bababa;
  border-radius: 6px 6px 0 0;
  font-size: 20px;
  color: #616161;
}
.current { background: #f1f1f1; color: #333; }
.doc-name {
  flex: 1;
  display: flex;
  justify-content: center;
  align-items: center;
  gap: 9px;
  height: 51px;
  padding-left: 13px;
}
.locked { gap: 11px; }
.close {
  width: 24px;
  height: 31px;
  padding-top: 16px;
  justify-content: center;
  background: #fdfdfd;
  border-radius: 3px;
}
.current .close { border: 1px solid #ddd; padding-top: 15px; }
.close path { stroke: #707070; stroke-width: 2; }
.status {
  width: 389px;
  height: 53px;
  padding-left: 20px;
  display: flex;
  align-items: center;
  gap: 29px;
}
.jobs { gap: 5px; margin-right: 12px; color: #616161; }
.avatar { margin-left: 7px; }

/* ribbon */
.ribbon {
  display: flex;
  height: 142px;
  background: #f1f1f1;
  border-bottom: 4px solid #f3f3f3;
  box-shadow: inset 0 -2px #d2d2d2;
}
.design {
  width: 183px;
  height: 101px;
  margin: 18px 0 0 19px;
  padding: 0 6px 2px;
  display: flex;
  justify-content: center;
  align-items: center;
  gap: 9px;
  border: 2px solid #ccc;
  border-radius: 6px;
  background: none;
  font-weight: 700;
}
.modes { display: flex; gap: 38px; padding-left: 29px; }
.modes a {
  padding: 2px 20px 0;
  line-height: 32px;
  border-bottom: 5px solid transparent;
}
.modes .on { color: #0696d7; border-color: #0696d7; font-weight: 700; }
.panels { display: flex; padding: 5px 0 0 6px; }
.panel {
  display: flex;
  flex-direction: column;
  align-items: center;
  gap: 9px;
  padding: 0 18px 0 19px;
  border-right: 1px solid #c4c4c4;
}
.narrow { padding: 0 22px; }
.panel:last-child { border: 0; }
.tools { display: flex; gap: 15px; }
.tools svg { overflow: visible; }
.label { gap: 5px; }

/* work area */
.work {
  position: relative;
  flex: 1;
  display: grid;
  grid-template-columns: 1fr auto 1fr;
  padding: 7px 7px 0;
}
.model {
  position: absolute;
  left: 560px;
  top: 264px;
  width: 980px;
  height: 470px;
}
.edges path, .edges ellipse {
  stroke: #262622;
  stroke-width: 1px;
  stroke-linejoin: round;
  vector-effect: non-scaling-stroke;
}
.left, .right, .center { position: relative; display: flex; flex-direction: column; }
.bar {
  width: 499px;
  height: 41px;
  padding: 0 17px 0 7px;
  display: flex;
  align-items: center;
  gap: 16px;
  background: #f1f1f1;
  border: 1px solid #ccc;
  border-right-width: 2px;
  border-bottom-width: 2px;
  color: #5c5c5c;
}
.bar h2 { flex: 1; }
.comments { margin-top: auto; padding-left: 40px; border-bottom: 0; }
.tree { padding: 9px 0 0 30px; }
.tree ul { padding-left: 30px; }
.row { display: flex; align-items: center; }
.tw { margin-right: 18px; }
.tw[width="11"] { margin-left: 1px; }
.chip {
  width: max-content;
  height: 34px;
  margin-bottom: 6px;
  padding: 0 19px 0 5px;
  display: flex;
  align-items: center;
  background: #f1f1f1;
}
.row .tw { margin-bottom: 6px; }
li > .chip { margin-left: 30px; }
.chip > span { margin-left: 23px; }
.eye { margin-right: 15px; }
.root { padding-right: 12px; }
.chip > .sel {
  width: 230px;
  height: 27px;
  margin: 0 7px 0 10px;
  padding-left: 7px;
  display: flex;
  align-items: center;
  gap: 26px;
  background: #999;
  color: #fff;
  font-weight: 700;
}
.root input {
  appearance: none;
  width: 23px;
  height: 23px;
  margin: 0;
  border: 1px solid #333;
  border-radius: 50%;
  background: radial-gradient(circle, #222 0 4px, #c5cbd8 5px, #f4f6fa 10px);
}

.center { justify-content: space-between; align-items: center; }
.readonly {
  height: 40px;
  padding: 0 21px 0 8px;
  display: flex;
  align-items: center;
  background: #f1f1f1;
}
.readonly strong { margin: 0 37px 0 14px; }
.note {
  padding-right: 24px;
  margin-right: 24px;
  border-right: 1px solid #aaa;
  line-height: 38px;
}
.readonly a { color: #0672ba; }
.nav {
  height: 40px;
  margin-bottom: 2px;
  padding: 0 7px 0 6px;
  display: flex;
  align-items: center;
  gap: 17px;
  background: #f1f1f1;
}
.nav .plain { gap: 4px; }
.nav .wide { gap: 9px; }
.nav .caret { width: 10px; margin-right: -6px; }
.nav .plain:last-child .caret { margin: 0; }

/* view cube and dialog */
.right { align-items: flex-end; }
.cube-text { font: 600 17px "Open Sans", "Noto Sans", sans-serif; fill: #94979b; text-anchor: middle; }
.cube-text .sm { font-size: 14px; }
.cube-text .ax-y, .cube-text .ax-x { font-size: 22px; font-weight: 400; }
.cube-text .ax-y { fill: #74ee74; }
.cube-text .ax-x { fill: #f77; }
.dialog {
  width: 416px;
  background: #f1f1f1;
  border: 1px solid #ccc;
  border-right-width: 2px;
  border-bottom-width: 2px;
}
.dialog-head {
  height: 41px;
  padding: 0 4px 0 19px;
  display: flex;
  align-items: center;
  gap: 7px;
  border-bottom: 2px solid #ccc;
  color: #5c5c5c;
}
.dialog-head h2 { flex: 1; }
.field {
  height: 50px;
  display: grid;
  grid-template-columns: 161px auto;
  justify-content: start;
  align-items: center;
  margin-left: 21px;
}
hr {
  height: 2px;
  margin: 8px 20px 0 2px;
  border: 0;
  background: #bbb;
}
.section {
  height: 50px;
  margin-top: 7px;
  padding-left: 17px;
  display: flex;
  align-items: center;
  gap: 11px;
  font-weight: 700;
}
.tri-down {
  width: 14px;
  height: 10px;
  background: #222;
  clip-path: polygon(0 0, 100% 0, 50% 100%);
}
.last { margin: 0; height: 57px; padding: 2px 0 0 16px; color: #aaa; gap: 15px; }
.tri-right {
  width: 10px;
  height: 14px;
  background: #222;
  clip-path: polygon(0 0, 100% 50%, 0 100%);
}
.pick { display: grid; align-items: center; }
.pick > * { grid-area: 1 / 1; }
.pick select {
  appearance: none;
  width: 180px;
  height: 44px;
  padding: 0 0 0 11px;
  border: 2px solid #c8c8c8;
  border-radius: 2px;
  background: #fff;
}
.pick .caret { justify-self: end; margin-right: 9px; }
.pick svg { margin-left: 6px; }
.pick.icon select { padding-left: 38px; }
.off, .off select:disabled { color: #aaa; opacity: 1; }
.off select:disabled { background: none; border-color: transparent; }
.off .caret { background: #aaa; }
.select-btn {
  width: 98px;
  height: 45px;
  padding: 0 0 0 11px;
  display: flex;
  align-items: center;
  gap: 7px;
  border: 0;
  border-radius: 1px;
  background: #0696d7;
  color: #fff;
}
.off input {
  appearance: none;
  width: 22px;
  height: 22px;
  margin: 0 0 0 8px;
  border: 1px solid #999;
  border-radius: 4px;
  background: linear-gradient(#f6f6f6, #dcdcdc);
}
.off output { padding-left: 6px; }
.dialog-foot {
  height: 60px;
  padding: 0 17px 0 14px;
  display: flex;
  align-items: center;
  gap: 17px;
  border-top: 2px solid #ccc;
  font-size: 20px;
}
.dialog-foot svg { margin-right: auto; }
.dialog-foot button {
  width: 100px;
  height: 34px;
  border: 2px solid #bbb;
  background: #e9e9e9;
  color: #555;
}
.dialog-foot button:disabled { color: #b0b0b0; }
```
